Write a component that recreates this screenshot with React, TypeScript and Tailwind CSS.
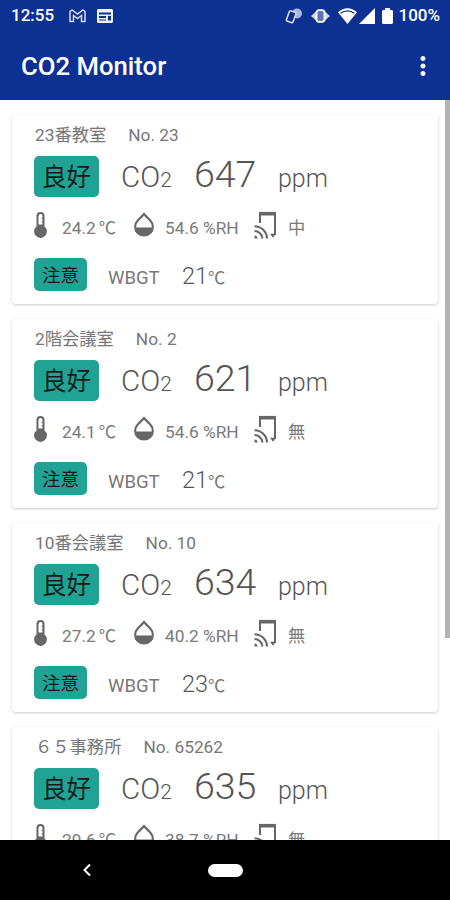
import React from "react";
import { MdMoreVert } from "react-icons/md";

interface Room {
  name: string;
  no: string;
  co2: string;
  temp: string;
  humidity: string;
  signal: string;
  wbgt: string;
}

const ROOMS: Room[] = [
  { name: "23番教室", no: "23", co2: "647", temp: "24.2", humidity: "54.6", signal: "中", wbgt: "21" },
  { name: "2階会議室", no: "2", co2: "621", temp: "24.1", humidity: "54.6", signal: "無", wbgt: "21" },
  { name: "10番会議室", no: "10", co2: "634", temp: "27.2", humidity: "40.2", signal: "無", wbgt: "23" },
  { name: "６５事務所", no: "65262", co2: "635", temp: "29.6", humidity: "38.7", signal: "無", wbgt: "24" },
];

const Thermometer = () => (
  <svg className="h-[26px] w-[13px]" viewBox="0 0 13 26">
    <path
      fill="currentColor"
      fillRule="evenodd"
      d="M6.5 0a4 4 0 0 1 4 4v10.5a6.4 6.4 0 1 1-8 0V4a4 4 0 0 1 4-4zm0 2a2 2 0 0 0-2 2v8.500h4v-2H7.6v-1h.9V7H7.6V6h.9V4a2 2 0 0 0-2-2z"
    />
  </svg>
);

const Droplet = () => (
  <svg className="h-[26px] w-5" viewBox="0 0 20 26">
    <path
      fill="currentColor"
      fillRule="evenodd"
      d="M10 0.500l7 7.200a9.900 9.900 0 1 1-14 0zM10 3.700L4.500 9.300A7.700 7.700 0 0 0 2.300 15.500h15.400a7.700 7.700 0 0 0-2.200-6.200z"
    />
  </svg>
);

const Signal = () => (
  <svg className="h-[28px] w-[23px]" viewBox="0 0 23 28" fill="none" stroke="currentColor">
    <path d="M6 12V2.200h15V24" strokeWidth="2" />
    <path d="M5 2.700h17" strokeWidth="3.600" />
    <path d="M16 22.800h6l-3 4z" fill="currentColor" stroke="none" />
    <path d="M0.500 15.300a12.500 12.500 0 0 1 12.500 12.200M0.500 20a8 8 0 0 1 8 7.500" strokeWidth="2.100" />
    <path d="M0.500 24.500v3h3a3 3 0 0 0-3-3z" fill="currentColor" stroke="none" />
  </svg>
);

const StatusBar = () => (
  <div className="flex h-8 items-center pl-[11px] pr-[10px] text-[17px] font-medium text-white">
    <span className="w-[58px]">12:55</span>
    <svg className="h-3.5 w-[17px]" viewBox="0 0 17 14" fill="none" stroke="#d3daee" strokeWidth="1.500">
      <path d="M1 12.500V2.500L3 1l5.500 4L14 1l2 1.500v10h-3.500V6.500l-4 3-4-3v6z" />
    </svg>
    <svg className="ml-[11px] h-3.5 w-4" viewBox="0 0 16 14">
      <path
        fill="#eef1fa"
        fillRule="evenodd"
        d="M1 0h14l1 1v12l-1 1H1l-1-1V1zM2 3.500v2h12v-2zM2 7v2h7V7zm0 3.500v1h7v-1zM11 7v4.500h3V7z"
      />
    </svg>
    <div className="flex-1" />
    <svg className="h-4 w-[18px]" viewBox="0 0 18 16">
      <circle cx="12" cy="5.500" r="5" fill="#a9b6dc" />
      <rect x="3" y="3.500" width="7" height="11" rx="1.500" transform="rotate(20 7 8)" fill="#0d3192" stroke="#d3daee" strokeWidth="1.600" />
    </svg>
    <svg className="ml-2 h-3.5 w-[19px]" viewBox="0 0 19 14">
      <path fill="#ccd5ec" d="M5 2.500v9L0 7zM14 2.500v9L19 7z" />
      <rect x="5.500" y="1.200" width="8" height="11.600" rx="2.500" fill="#5b74b7" stroke="white" strokeWidth="1.800" />
    </svg>
    <svg className="ml-2 h-4 w-[19px]" viewBox="0 0 19 16">
      <path fill="white" d="M9.500 16 0 4.200Q9.500-3.500 19 4.200z" />
      <path d="M2.500 5.200q7-4.800 14 0" fill="none" stroke="#0d3192" strokeWidth="1.300" />
    </svg>
    <svg className="ml-0.5 h-4 w-4" viewBox="0 0 16 16">
      <path fill="white" d="M16 0v16H0z" />
    </svg>
    <svg className="ml-[7px] h-4 w-[11px]" viewBox="0 0 11 16">
      <path fill="white" d="M3 0h5v2h2l1 1v12l-1 1H1l-1-1V3l1-1h2z" />
    </svg>
    <span className="ml-[5px]">100%</span>
  </div>
);

const RoomCard: React.FC<{ room: Room }> = ({ room }) => (
  <div className="h-[189px] shrink-0 rounded-[4px] bg-white pl-[22px] shadow-[0_1px_3px_rgba(0,0,0,0.2)]">
    <div className="flex h-[41px] items-center gap-[22px] whitespace-nowrap pl-px pt-px text-[17.300px] text-[#777777]">
      <span>{room.name}</span>
      <span>No. {room.no}</span>
    </div>

    <div className="flex h-[41px] items-center">
      <span className="flex h-[41px] w-[65px] items-center justify-center rounded-[5px] bg-[#20a294] pt-[3px] text-[24.500px] text-[#121c1b]">
        良好
      </span>
      <div className="ml-[22px] flex items-baseline font-light text-[#555555]">
        <span className="w-[73px] text-[29.500px]">
          CO<span className="text-[21px]">2</span>
        </span>
        <span className="w-[84px] text-[37.500px] leading-[43px]">{room.co2}</span>
        <span className="text-[25px]">ppm</span>
      </div>
    </div>

    <div className="flex h-[60px] items-center text-[17.300px]">
      <span className="mb-1 w-7">
        <Thermometer />
      </span>
      <span className="w-[72px] pt-1 text-[#7a7a7a]">
        {room.temp}
        <span className="ml-[3px]">℃</span>
      </span>
      <span className="mb-1 w-[31px]">
        <Droplet />
      </span>
      <span className="w-[89px] pt-1 text-[#7a7a7a]">{room.humidity} %RH</span>
      <span className="mb-1 w-[34px]">
        <Signal />
      </span>
      <span className="pt-1 text-[#7a7a7a]">{room.signal}</span>
    </div>

    <div className="flex h-[35px] items-center">
      <span className="flex h-[33px] w-[53px] items-center justify-center rounded-[5px] bg-[#20a294] pt-1 text-[18.500px] text-[#121c1b]">
        注意
      </span>
      <div className="ml-[21px] flex items-baseline pt-1 text-[#777777]">
        <span className="w-[74px] text-[18.500px]">WBGT</span>
        <span className="text-[23.500px] font-light text-[#555555]">{room.wbgt}</span>
        <span className="text-[17.300px]">℃</span>
      </div>
    </div>
  </div>
);

export default function App() {
  return (
    <div className="flex h-[900px] w-[450px] flex-col overflow-hidden bg-white font-[Roboto,'Noto_Sans_CJK_JP',sans-serif] text-[#666666]">
      <header className="h-[100px] shrink-0 bg-[#0d3192]">
        <StatusBar />
        <div className="flex h-[68px] items-center justify-between pl-[21px] pr-[12px] text-white">
          <h1 className="text-[25.700px] font-medium">CO2 Monitor</h1>
          <MdMoreVert className="size-[30px]" />
        </div>
      </header>

      <main className="flex min-h-0 flex-1 justify-between overflow-hidden">
        <div className="ml-3 flex w-[426px] flex-col gap-[15px] pt-[15px]">
          {ROOMS.map((room) => (
            <RoomCard key={room.name} room={room} />
          ))}
        </div>
        {/* Scroll thumb */}
        <div className="h-[538px] w-[5px] bg-[#b3b3b3]" />
      </main>

      <nav className="flex h-[60px] shrink-0 items-center bg-black pl-[82px] text-white">
        <svg className="h-3.5 w-[9px]" viewBox="0 0 9 14" fill="none" stroke="currentColor" strokeWidth="2">
          <path d="M8 1.500 2.500 7 8 12.500" />
        </svg>
        <div className="ml-[117px] h-[13px] w-[35px] rounded-full bg-white" />
      </nav>
    </div>
  );
}
